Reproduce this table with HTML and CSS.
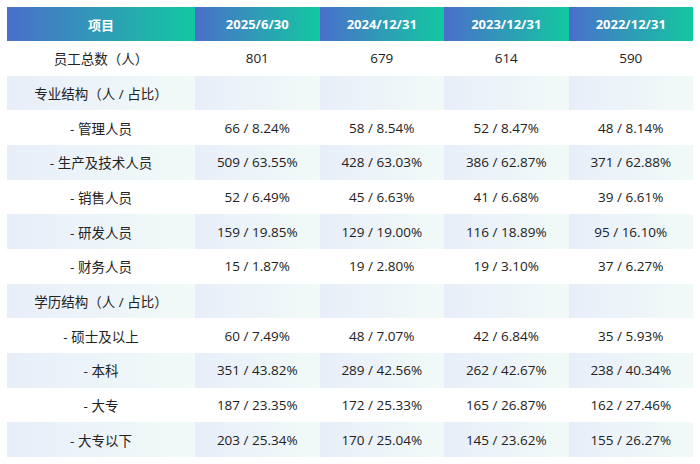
FILE: index.html
```html
<!DOCTYPE html>
<html lang="zh-CN">
<head>
<meta charset="utf-8">
<title>员工结构</title>
<link rel="stylesheet" href="styles.css">
</head>
<body>
<table class="staff">
  <colgroup>
    <col class="c-item">
    <col class="c-val"><col class="c-val"><col class="c-val"><col class="c-val">
  </colgroup>
  <thead>
    <tr><th>项目</th><th>2025/6/30</th><th>2024/12/31</th><th>2023/12/31</th><th>2022/12/31</th></tr>
  </thead>
  <tbody>
    <tr><td>员工总数（人）</td><td>801</td><td>679</td><td>614</td><td>590</td></tr>
    <tr><td>专业结构（人 / 占比）</td><td></td><td></td><td></td><td></td></tr>
    <tr><td>- 管理人员</td><td>66 / 8.24%</td><td>58 / 8.54%</td><td>52 / 8.47%</td><td>48 / 8.14%</td></tr>
    <tr><td>- 生产及技术人员</td><td>509 / 63.55%</td><td>428 / 63.03%</td><td>386 / 62.87%</td><td>371 / 62.88%</td></tr>
    <tr><td>- 销售人员</td><td>52 / 6.49%</td><td>45 / 6.63%</td><td>41 / 6.68%</td><td>39 / 6.61%</td></tr>
    <tr><td>- 研发人员</td><td>159 / 19.85%</td><td>129 / 19.00%</td><td>116 / 18.89%</td><td>95 / 16.10%</td></tr>
    <tr><td>- 财务人员</td><td>15 / 1.87%</td><td>19 / 2.80%</td><td>19 / 3.10%</td><td>37 / 6.27%</td></tr>
    <tr><td>学历结构（人 / 占比）</td><td></td><td></td><td></td><td></td></tr>
    <tr><td>- 硕士及以上</td><td>60 / 7.49%</td><td>48 / 7.07%</td><td>42 / 6.84%</td><td>35 / 5.93%</td></tr>
    <tr><td>- 本科</td><td>351 / 43.82%</td><td>289 / 42.56%</td><td>262 / 42.67%</td><td>238 / 40.34%</td></tr>
    <tr><td>- 大专</td><td>187 / 23.35%</td><td>172 / 25.33%</td><td>165 / 26.87%</td><td>162 / 27.46%</td></tr>
    <tr><td>- 大专以下</td><td>203 / 25.34%</td><td>170 / 25.04%</td><td>145 / 23.62%</td><td>155 / 26.27%</td></tr>
  </tbody>
</table>
</body>
</html>
```
FILE: styles.css
```css
html, body {
  margin: 0;
  padding: 0;
  background: #ffffff;
}
body {
  padding: 7px;
  font-family: "Open Sans", "Noto Sans CJK SC", sans-serif;
  color: #222222;
}
.staff {
  width: 686px;
  border-collapse: collapse;
  table-layout: fixed;
  font-size: 13.5px;
}
.c-item { width: 188px; }
.c-val { width: 124.5px; }
.staff th,
.staff td {
  padding: 0;
  text-align: center;
  vertical-align: middle;
  white-space: nowrap;
}
.staff thead tr { height: 34px; }
.staff th {
  color: #ffffff;
  font-weight: 700;
  font-size: 13px;
  background: linear-gradient(to right, #4a6fcb, #13c8a1);
}
.staff tbody tr { height: 34.67px; }
.staff tbody tr:nth-child(even) td {
  background: linear-gradient(to right, #e8eef9, #f2faf8);
}
```
